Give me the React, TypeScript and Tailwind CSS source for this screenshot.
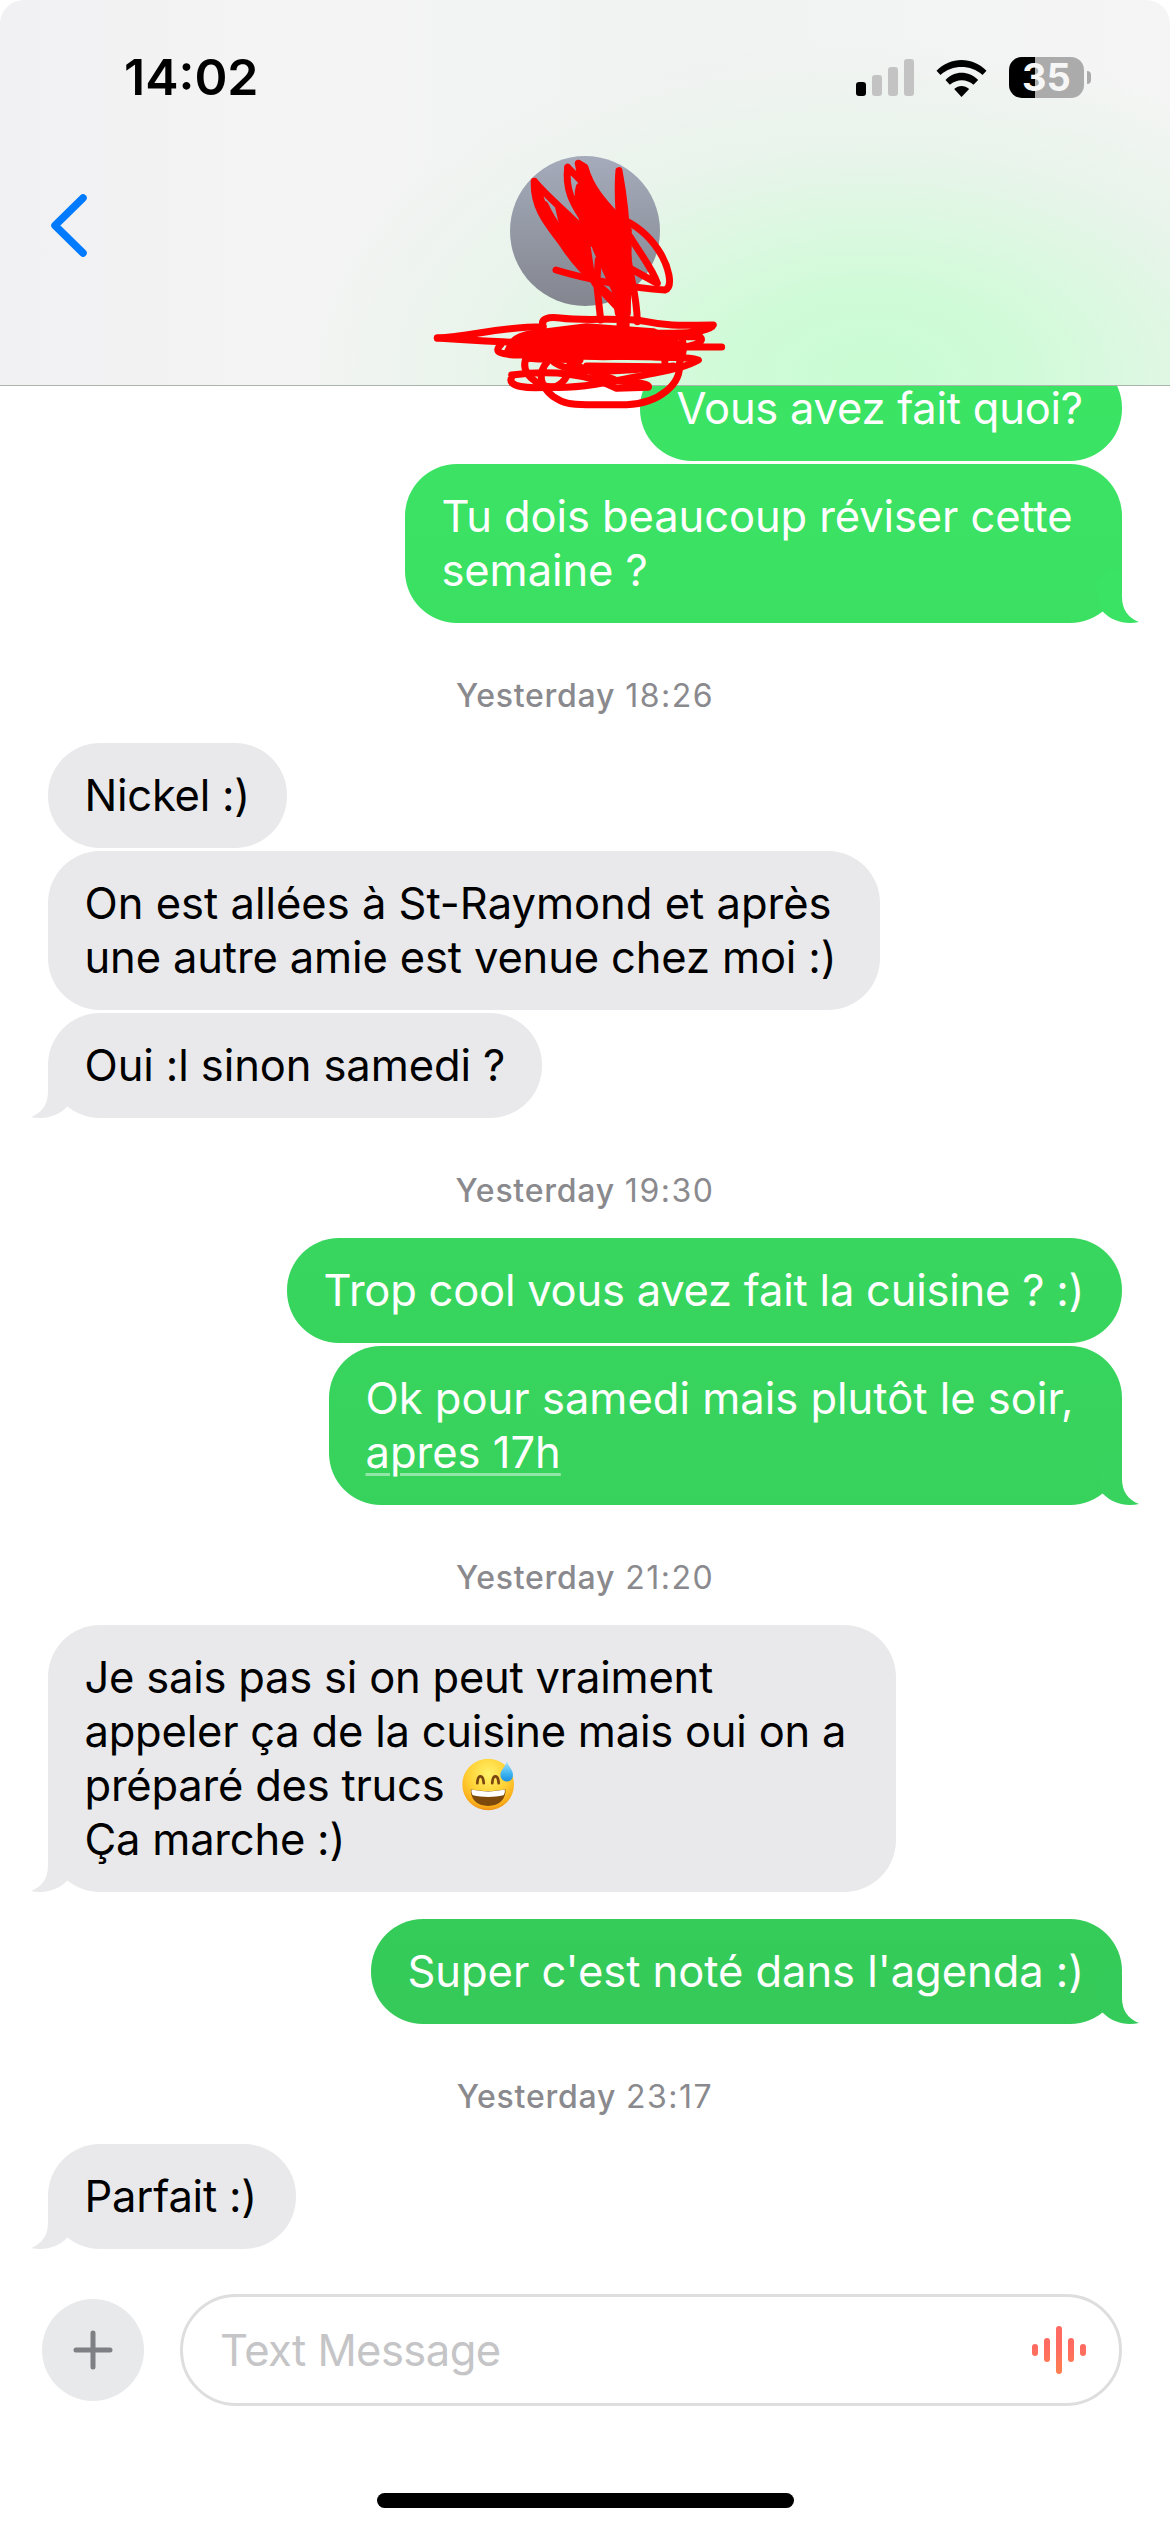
import React from "react";
import clsx from "clsx";

type Message = {
  from: "me" | "them";
  lines: React.ReactNode[];
  size: string;
  tail?: string; // tail colour, only on the last bubble of a group
  gap?: string;
};

type Group = {
  time?: string;
  messages: Message[];
};

const GREY = "#e9e9eb";

function SweatSmile() {
  return (
    <svg viewBox="0 0 156 156" className="ml-[5px] inline-block h-[53px] w-[53px] align-[-10px]" role="img" aria-label="😅">
      <defs>
        <radialGradient id="face" cx="50%" cy="30%" r="72%">
          <stop offset="0" stopColor="#fff26a" />
          <stop offset="0.55" stopColor="#ffd034" />
          <stop offset="0.85" stopColor="#fbb01c" />
          <stop offset="1" stopColor="#e98a10" />
        </radialGradient>
        <linearGradient id="drop" x1="0" y1="0" x2="0" y2="1">
          <stop offset="0" stopColor="#a8e4fb" />
          <stop offset="0.6" stopColor="#3fb5f2" />
          <stop offset="1" stopColor="#1c8fe0" />
        </linearGradient>
      </defs>
      <circle cx="77" cy="78" r="76" fill="url(#face)" />
      <path d="M45 74c1-14 4-20 9-20s9 6 10 20" fill="none" stroke="#7a4510" strokeWidth="8" strokeLinecap="round" />
      <path d="M89 74c1-14 4-20 9-20s9 6 10 20" fill="none" stroke="#7a4510" strokeWidth="8" strokeLinecap="round" />
      <path d="M26 92c30 7 72 7 102 0 2 28-18 49-51 49s-53-21-51-49z" fill="#7d4a0b" />
      <path d="M28 93c30 7 68 7 98 0 1 8-1 13-4 17-28 6-62 6-90 0-3-4-5-9-4-17z" fill="#fff" />
      <path d="M132 10c7 18 18 25 18 40 0 12-8 19-18 19s-19-8-19-19c0-15 13-22 19-40z" fill="url(#drop)" />
    </svg>
  );
}

const groups: Group[] = [
  {
    messages: [
      { from: "me", size: "w-[482px] tracking-[-0.25px]", lines: ["Vous avez fait quoi?"] },
      { from: "me", size: "w-[717px] tracking-[-0.1px]", lines: ["Tu dois beaucoup réviser cette", "semaine ?"], tail: "#3ae363" },
    ],
  },
  {
    time: "18:26",
    messages: [
      { from: "them", size: "w-[239px] tracking-[-0.25px]", lines: ["Nickel :)"] },
      {
        from: "them",
        size: "w-[832px]",
        lines: ["On est allées à St-Raymond et après", <span className="tracking-[-0.14px]">une autre amie est venue chez moi :)</span>],
      },
      { from: "them", size: "w-[494px] tracking-[-0.1px]", lines: ["Oui :l sinon samedi ?"], tail: GREY },
    ],
  },
  {
    time: "19:30",
    messages: [
      { from: "me", size: "w-[835px] tracking-[-0.23px]", lines: ["Trop cool vous avez fait la cuisine ? :)"] },
      {
        from: "me",
        size: "w-[793px]",
        lines: [
          "Ok pour samedi mais plutôt le soir,",
          <span className="underline decoration-white/45 decoration-[3px] underline-offset-[5px]">apres 17h</span>,
        ],
        tail: "#37d35e",
      },
    ],
  },
  {
    time: "21:20",
    messages: [
      {
        from: "them",
        size: "w-[848px] tracking-[-0.22px]",
        lines: [
          "Je sais pas si on peut vraiment",
          "appeler ça de la cuisine mais oui on a",
          <>
            préparé des trucs <SweatSmile />
          </>,
          "Ça marche :)",
        ],
        tail: GREY,
      },
      { from: "me", size: "w-[751px] tracking-[-0.05px]", gap: "mt-[24px]", lines: ["Super c'est noté dans l'agenda :)"], tail: "#35cb5b" },
    ],
  },
  {
    time: "23:17",
    messages: [{ from: "them", size: "w-[248px] tracking-[-0.2px]", lines: ["Parfait :)"], tail: GREY }],
  },
];

function StatusBar() {
  return (
    <div className="flex h-[156px] items-start justify-between pr-[79px] pl-[124px]">
      <span className="mt-[47px] text-[50px] leading-[61px] font-semibold">14:02</span>
      <div className="mt-[57px] flex h-[41px] items-center">
        <div className="flex h-[37px] items-end gap-[6px]">
          <i className="h-[14px] w-[10px] rounded-[3px] bg-black" />
          <i className="h-[21px] w-[10px] rounded-[3px] bg-[#c2c3c2]" />
          <i className="h-[29px] w-[10px] rounded-[3px] bg-[#c2c3c2]" />
          <i className="h-[37px] w-[10px] rounded-[3px] bg-[#c2c3c2]" />
        </div>
        <svg viewBox="348 84 152 114" className="ml-[22px] h-[38px] w-[51px]">
          <path d="M349 119C391 76 457 76 499 119L487 132C451 100 397 100 361 132Z" />
          <path d="M376 147C403 118 445 118 474 147L460 161C440 143 410 143 389 161Z" />
          <path d="M402 174C415 162 433 162 447 174L424 198Z" />
        </svg>
        <div className="ml-[22px] flex h-[41px] w-[75px] items-center justify-center rounded-[13px] bg-[linear-gradient(90deg,#000_26px,#ababab_26px)] text-[38px] leading-[41px] font-bold text-[#f5f6f5]">
          35
        </div>
        <i className="ml-[3px] h-[13px] w-[4px] rounded-r-full bg-[#ababab]" />
      </div>
    </div>
  );
}

// Red marker scrawl hiding the contact's initials and name
function Scribble() {
  return (
    <svg viewBox="0 0 960 840" className="absolute top-[-16px] left-[-90px] h-[280px] w-[320px] max-w-none" fill="none" stroke="#ff0000" strokeWidth="21" strokeLinecap="round" strokeLinejoin="round">
      <path d="M408 390C500 418 640 445 735 450C762 440 745 375 715 330C685 285 650 255 600 235" />
      <path d="M343 124C338 210 395 265 430 315C465 370 500 405 585 480M343 124C390 180 440 215 500 280M358 160C370 230 440 290 520 420M375 195C400 250 440 300 500 375" />
      <path d="M443 82C435 150 460 190 485 230M443 82L500 140M475 70L495 82C515 160 580 215 620 262M475 70C480 110 500 160 540 220M478 140C465 180 490 250 510 310" />
      <path d="M597 92C590 160 598 250 605 330L600 560M597 92C608 150 620 250 622 330C625 400 650 450 652 545M535 360L530 430L542 540M620 440L618 580" />
      <path d="M630 290C660 340 700 390 712 430L630 385" />
      <path d="M490 150L520 150L600 245L625 270L622 520L595 520L585 450L530 330L490 220Z" fill="#ff0000" />
      <path d="M410 205L480 260L505 300L520 400L470 350L425 270Z" fill="#ff0000" strokeWidth="8" />
      <path d="M525 430L590 500" />
      <path d="M52 594C150 590 240 560 370 560C360 535 385 530 420 534C500 545 600 530 680 545C750 560 800 555 880 555C875 570 820 580 760 580H370" />
      <path d="M52 594C180 604 250 605 300 608" />
      <path d="M275 610C290 585 330 580 380 575L500 560L700 575L760 605L790 622L770 645L550 650L260 640Z" fill="#ff0000" />
      <path d="M242 615C220 635 240 645 300 645L780 652M905 621H600M720 590H840C855 605 830 615 780 625" />
      <path d="M318 655C300 700 350 738 400 742C500 745 620 715 700 700C760 688 800 680 835 660C800 650 780 655 700 650" />
      <path d="M318 655C380 660 440 655 480 660M275 712C260 740 320 748 400 740M275 705C400 690 500 700 590 745L685 742C690 730 640 725 590 722C540 700 480 690 450 660" />
      <path d="M385 662C350 700 360 740 400 770C430 790 450 794 500 794H620C720 790 785 730 778 670C790 640 800 610 775 580M735 600C730 650 740 660 732 690" />
      <path d="M400 665C440 700 560 700 760 678M500 678L720 680M450 670C450 710 425 735 400 742" />
    </svg>
  );
}

function Header() {
  return (
    <header className="relative z-10 h-[386px] shrink-0 rounded-t-[24px] border-b border-[#a9b5ab] bg-[radial-gradient(ellipse_500px_290px_at_870px_375px,#c9fcd3_0%,#cffbd7_28%,#dcf8e1_53%,#e9f4eb_78%,transparent_115%),linear-gradient(90deg,#f1f1f3,#f4f4f4_25%,#f1f2f2_60%,#f5f5f5)]">
      <StatusBar />
      <div className="flex items-start">
        <svg viewBox="0 0 44 72" className="mt-[34px] ml-[47px] h-[72px] w-[44px]">
          <path d="M36 8L8 35.5L36 63" fill="none" stroke="#007aff" strokeWidth="7.5" strokeLinecap="round" strokeLinejoin="round" />
        </svg>
        <div className="relative ml-[419px] h-[150px] w-[150px] rounded-full bg-linear-to-b from-[#a5abbb] to-[#83868f]">
          <Scribble />
        </div>
      </div>
    </header>
  );
}

function Bubble({ message, first }: { message: Message; first: boolean }) {
  const mine = message.from === "me";
  return (
    <div
      className={clsx(
        "relative rounded-[52px] pt-[24.5px] pb-[26.5px] pl-[36.5px] text-[43.5px] leading-[54px] whitespace-nowrap",
        message.size,
        message.gap,
        mine ? "self-end bg-linear-to-b from-[#3dea67] to-[#33c255] bg-fixed text-white" : "bg-[#e9e9eb] text-black",
        first && "-mt-[30px]"
      )}
    >
      {message.lines.map((line, i) => (
        <div key={i} className="h-[54px]">
          {line}
        </div>
      ))}
      {message.tail && (
        <svg viewBox="0 0 50 60" className={clsx("absolute bottom-0 h-[60px] w-[50px]", mine ? "-right-[18px]" : "-left-[18px] -scale-x-100")}>
          <path d="M32 10V34C32 46 38 55 49 59C35 62 22 58 12.5 48.5L5 20L20 5Z" fill={message.tail} />
        </svg>
      )}
    </div>
  );
}

function Composer() {
  return (
    <div className="mt-[45px] flex items-center pr-[48px] pl-[42px]">
      <button className="flex h-[102px] w-[102px] items-center justify-center rounded-full bg-[#e8e9eb]">
        <svg viewBox="0 0 40 40" className="h-[40px] w-[40px]">
          <path d="M20 3V37M3 20H37" stroke="#7f8084" strokeWidth="5" strokeLinecap="round" />
        </svg>
      </button>
      <div className="ml-[36px] flex h-[112px] flex-1 items-center justify-between rounded-[56px] border-[3px] border-[#dedede] pr-[33px] pl-[37px]">
        <span className="text-[43.5px] leading-[54px] tracking-[-0.55px] text-[#c5c5c7]">Text Message</span>
        <svg viewBox="0 0 54 48" className="h-[48px] w-[54px]">
          <defs>
            <linearGradient id="wave" gradientUnits="userSpaceOnUse" x1="0" y1="0" x2="0" y2="48">
              <stop offset="0" stopColor="#ff6b63" />
              <stop offset="0.45" stopColor="#ff6b60" />
              <stop offset="1" stopColor="#ff8050" />
            </linearGradient>
          </defs>
          <g fill="url(#wave)">
            <rect x="0" y="18" width="6" height="12" rx="3" />
            <rect x="12" y="12" width="6" height="24" rx="3" />
            <rect x="24" y="0" width="6" height="48" rx="3" />
            <rect x="36" y="12" width="6" height="24" rx="3" />
            <rect x="48" y="18" width="6" height="12" rx="3" />
          </g>
        </svg>
      </div>
    </div>
  );
}

export default function App() {
  return (
    <main className="flex h-[2532px] w-[1170px] flex-col overflow-hidden bg-white font-['Inter','Liberation_Sans',sans-serif] text-black">
      <Header />
      {groups.map((group, g) => (
        <section key={g} className="flex flex-col px-[48px]">
          {group.time && (
            <p className="flex h-[120px] items-center justify-center gap-[10px] pt-[25px] text-[32px] leading-[39px] text-[#8a8a8e]">
              <span className="font-medium tracking-[0.75px]">Yesterday</span>
              <span className="tracking-[1.5px]">{group.time}</span>
            </p>
          )}
          <div className="flex flex-col items-start gap-[3px]">
            {group.messages.map((message, m) => (
              <Bubble key={m} message={message} first={g === 0 && m === 0} />
            ))}
          </div>
        </section>
      ))}
      <Composer />
      <div className="mx-auto mt-[87px] h-[15px] w-[417px] rounded-full bg-black" />
    </main>
  );
}
